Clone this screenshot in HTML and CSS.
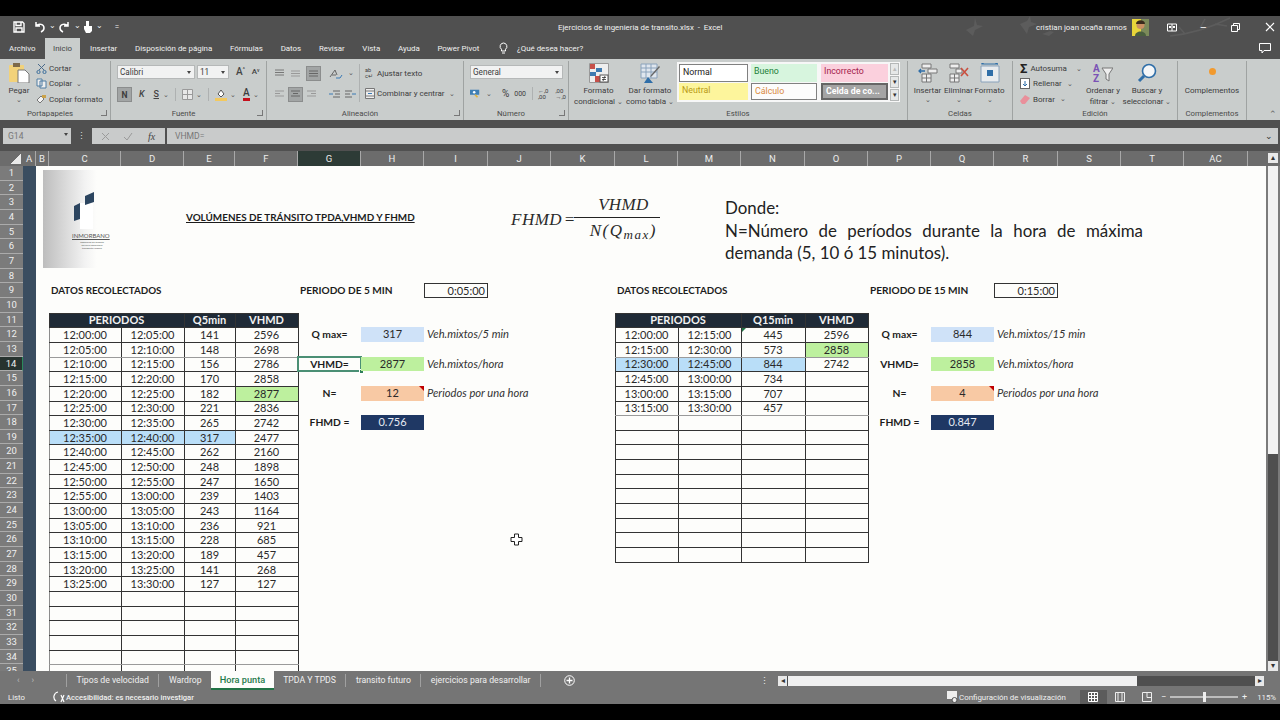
FILE: index.html
```html
<!DOCTYPE html>
<html lang="es">

<head>
    <meta charset="UTF-8">
    <title>Ejercicios de ingenieria de transito.xlsx - Excel</title>
    <link rel="stylesheet" href="styles.css">
</head>

<body>
    <div class="excel">

        <div class="titlebar">
            <div class="qat">
                <svg class="ico save" width="12" height="12" viewBox="0 0 12 12"><path d="M1 1h8.500L11 2.500V11H1z M3 1v3.500h5V1 M3 11V7h6v4" fill="none" stroke="#fff" stroke-width="1.400"/></svg>
                <svg class="ico" width="13" height="12" viewBox="0 0 13 12"><path d="M3 1v4h4 M3 5c3-3 8-2 8 2 0 2-1 3-3 4" fill="none" stroke="#fff" stroke-width="1.500"/></svg>
                <span class="caret">&#8964;</span>
                <svg class="ico" width="13" height="12" viewBox="0 0 13 12"><path d="M10 1v4H6 M10 5C7 2 2 3 2 7c0 2 1 3 3 4" fill="none" stroke="#fff" stroke-width="1.500"/></svg>
                <span class="caret">&#8964;</span>
                <svg class="ico" width="10" height="14" viewBox="0 0 10 14"><path d="M3 1h3v5h3v5l-2 2H3L1 9V6h2z" fill="#fff"/></svg>
                <span class="caret">&#8964;</span>
                <span class="caret small">=</span>
            </div>
            <div class="doc-title">Ejercicios de ingenieria de transito.xlsx &nbsp;-&nbsp; Excel</div>
            <svg class="leaves" width="300" height="22" viewBox="0 0 300 22"><path d="M6 14l8-4 1-8 2 7 6 1-8 4-2 6z M60 8l7-3 3-5 1 6 6 2-8 3-2 7z M82 18l8-3 4 1-5 4z" fill="#5c5c5c"/><path d="M210 20c20-2 40-8 60-18M240 12l5-9M255 8l12 2M225 18l-6-7" fill="none" stroke="#5c5c5c" stroke-width="1.500"/></svg>
            <div class="win">
                <span class="user">cristian joan ocaña ramos</span>
                <svg class="avatar" width="17" height="17" viewBox="0 0 17 17"><rect width="17" height="17" fill="#e8d53a"/><rect x="9" width="8" height="17" fill="#7c8a5a"/><circle cx="8.500" cy="6" r="4" fill="#c98f62"/><path d="M4 5c0-5 9-5 9 0z" fill="#3a2a1c"/><path d="M3 17c0-6 11-6 11 0z" fill="#4a5f3f"/></svg>
                <svg class="ico" width="10" height="9" viewBox="0 0 10 9"><path d="M.5 1h9v7h-9z M5 1v7" fill="none" stroke="#fff"/><path d="M2 3h2v2H2z M6 3h2v2H6z" fill="#fff"/></svg>
                <span class="win-btn">&#8211;</span>
                <svg class="ico" width="9" height="9" viewBox="0 0 9 9"><path d="M.5 2.500h6v6h-6z M2.500 2.500v-2h6v6h-2" fill="none" stroke="#fff"/></svg>
                <svg class="ico" width="10" height="10" viewBox="0 0 10 10"><path d="M1 1l8 8M9 1l-8 8" stroke="#fff" stroke-width="1.200"/></svg>
            </div>
        </div>

        <div class="tabs">
            <span class="tab">Archivo</span>
            <span class="tab current">Inicio</span>
            <span class="tab">Insertar</span>
            <span class="tab">Disposición de página</span>
            <span class="tab">Fórmulas</span>
            <span class="tab">Datos</span>
            <span class="tab">Revisar</span>
            <span class="tab">Vista</span>
            <span class="tab">Ayuda</span>
            <span class="tab">Power Pivot</span>
            <span class="tab tell">
                <svg width="9" height="13" viewBox="0 0 9 13"><path d="M4.500 1a3.500 3.500 0 0 0-2 6.300V9h4V7.300a3.500 3.500 0 0 0-2-6.300z M3 11h3" fill="none" stroke="#fff"/></svg>
                ¿Qué desea hacer?
            </span>
            <svg class="comment" width="12" height="11" viewBox="0 0 12 11"><path d="M.5.5h11v7H5L3 10V7.500H.5z" fill="none" stroke="#fff"/></svg>
        </div>

        <div class="ribbon">

            <div class="group g-clip">
                <div class="group-body">
                    <div class="big">
                        <svg width="22" height="20" viewBox="0 0 22 20"><rect x="1" y="2" width="15" height="17" rx="1" fill="#f2d27a"/><rect x="5" y="0" width="7" height="4" fill="#7d6a4a"/><path d="M10 7h7l4 4v9H10z" fill="#fff" stroke="#777"/></svg>
                        <span>Pegar</span>
                        <span class="chev">&#8964;</span>
                    </div>
                    <div class="stack">
                        <div class="line"><svg width="11" height="11" viewBox="0 0 11 11"><path d="M2 1l6 6M9 1L3 7" stroke="#4a6a8a" fill="none"/><circle cx="2.500" cy="9" r="1.600" fill="none" stroke="#3d6f9c"/><circle cx="8.500" cy="9" r="1.600" fill="none" stroke="#3d6f9c"/></svg>Cortar</div>
                        <div class="line"><svg width="11" height="11" viewBox="0 0 11 11"><path d="M1 1h5v7H1z M4 3h6v7H4z" fill="#eee" stroke="#4f7da3"/></svg>Copiar <span class="chev">&#8964;</span></div>
                        <div class="line"><svg width="11" height="11" viewBox="0 0 11 11"><path d="M1 6l4-4 3 3-4 4z" fill="#f3f3f3" stroke="#777"/><path d="M6 1h4v3H6z" fill="#caa24a"/></svg>Copiar formato</div>
                    </div>
                </div>
                <div class="group-name">Portapapeles<i class="launch"></i></div>
            </div>

            <div class="group g-font">
                <div class="group-body col">
                    <div class="tools">
                        <div class="combo font-name">Calibri<span class="arrow"></span></div>
                        <div class="combo font-size">11<span class="arrow"></span></div>
                        <span class="glyph big-a">A<sup>^</sup></span>
                        <span class="glyph small-a">A<sup>v</sup></span>
                    </div>
                    <div class="tools t2">
                        <span class="toggle on">N</span>
                        <span class="glyph it">K</span>
                        <span class="glyph un">S</span><span class="chev">&#8964;</span>
                        <i class="rule"></i>
                        <svg width="11" height="11" viewBox="0 0 11 11"><path d="M.5.5h10v10H.5z M.5 5.500h10 M5.500.5v10" fill="#e8e8e8" stroke="#9a9a9a"/></svg><span class="chev">&#8964;</span>
                        <i class="rule"></i>
                        <svg width="12" height="13" viewBox="0 0 12 13"><path d="M3 6l3-4 3 4-3 3z" fill="#fff" stroke="#555"/><rect y="10" width="12" height="3" fill="#f3c95e"/></svg><span class="chev">&#8964;</span>
                        <span class="font-color">A</span><span class="chev">&#8964;</span>
                    </div>
                </div>
                <div class="group-name">Fuente<i class="launch"></i></div>
            </div>

            <div class="group g-align">
                <div class="group-body">
                    <div class="col-tight">
                        <div class="tools">
                            <svg width="11" height="8" viewBox="0 0 11 8"><path d="M1 1h9M1 3.500h9M1 6h9" stroke="#777"/></svg>
                            <svg width="11" height="8" viewBox="0 0 11 8"><path d="M1 2h9M1 4.500h9M1 7h9" stroke="#999"/></svg>
                            <span class="toggle on"><svg width="11" height="8" viewBox="0 0 11 8"><path d="M1 2h9M1 4.500h9M1 7h9" stroke="#666"/></svg></span>
                            <svg class="orient" width="14" height="11" viewBox="0 0 14 11"><path d="M1 9l5-7 2 5M3 7h4" fill="none" stroke="#666"/><path d="M7 10h4l2-3" fill="none" stroke="#3a7ab5"/></svg><span class="chev">&#8964;</span>
                        </div>
                        <div class="tools t-align">
                            <svg width="11" height="8" viewBox="0 0 11 8"><path d="M1 1h9M1 3.500h5M1 6h9" stroke="#999"/></svg>
                            <span class="toggle on"><svg width="11" height="8" viewBox="0 0 11 8"><path d="M1 1h9M3 3.500h5M1 6h9" stroke="#666"/></svg></span>
                            <svg width="11" height="8" viewBox="0 0 11 8"><path d="M1 1h9M5 3.500h5M1 6h9" stroke="#999"/></svg>
                            <svg class="indent" width="11" height="8" viewBox="0 0 11 8"><path d="M4 1h7M6 4h5M4 7h7" stroke="#666"/><path d="M0 4h4" stroke="#3a7ab5"/></svg>
                            <svg width="11" height="8" viewBox="0 0 11 8"><path d="M0 1h7M0 4h5M0 7h7" stroke="#666"/><path d="M7 4h4" stroke="#3a7ab5"/></svg>
                        </div>
                    </div>
                    <div class="stack wrap-col">
                        <div class="line"><span class="ab-ico">ab<br>c&#8629;</span>Ajustar texto</div>
                        <div class="line"><svg width="10" height="11" viewBox="0 0 10 11"><path d="M.5.5h9v10h-9z M.5 3h9 M.5 8h9" fill="#eee" stroke="#777"/><path d="M3 5.500h4" stroke="#3a7ab5"/></svg>Combinar y centrar <span class="chev">&#8964;</span></div>
                    </div>
                </div>
                <div class="group-name">Alineación<i class="launch"></i></div>
            </div>

            <div class="group g-num">
                <div class="group-body col">
                    <div class="combo num-format">General<span class="arrow"></span></div>
                    <div class="tools t-num">
                        <svg width="13" height="11" viewBox="0 0 13 11"><rect y="1" width="11" height="6" fill="#3f7fb5"/><circle cx="5" cy="4" r="1.500" fill="#fff"/><path d="M6 7l3 3" stroke="#e0b23c" stroke-width="2"/></svg><span class="chev">&#8964;</span>
                        <span class="pct">%</span>
                        <span class="mil">000</span>
                        <i class="rule"></i>
                        <span class="dec">&#8592;,0<br>,00</span>
                        <span class="dec">,00<br>&#8594;,0</span>
                    </div>
                </div>
                <div class="group-name">Número<i class="launch"></i></div>
            </div>

            <div class="group g-styles">
                <div class="group-body">
                    <div class="big b-cf">
                        <svg width="20" height="20" viewBox="0 0 20 20"><path d="M.5.5h19v19H.5z" fill="#eee" stroke="#999"/><path d="M1 1h5v5H1z M6 13h5v6H6z" fill="#c6504a"/><path d="M7 5h6v4H7z M1 9h6v4H1z" fill="#3e7ab0"/><rect x="11" y="12" width="8" height="7" fill="#fff" stroke="#555"/><path d="M13 14.500h4M13 16.500h4M16 13l-2 5" stroke="#333" stroke-width=".8"/></svg>
                        <span>Formato<br>condicional <span class="chev">&#8964;</span></span>
                    </div>
                    <div class="big b-ft">
                        <svg width="21" height="20" viewBox="0 0 21 20"><path d="M1 1h16v14H1z M1 5h16M1 9h16M6 1v14M11 1v14" fill="#dfe6ee" stroke="#8aa2bb"/><path d="M20 4l-8 9-2 1 1-2 8-9z" fill="#666"/><path d="M4 20l4-6 5 6z" fill="#2f6ea8"/></svg>
                        <span>Dar formato<br>como tabla <span class="chev">&#8964;</span></span>
                    </div>
                    <div class="gallery">
                        <div class="style-grid">
                            <span class="st st-normal">Normal</span>
                            <span class="st st-good">Bueno</span>
                            <span class="st st-bad">Incorrecto</span>
                            <span class="st st-neutral">Neutral</span>
                            <span class="st st-calc">Cálculo</span>
                            <span class="st st-check">Celda de co...</span>
                        </div>
                        <div class="gallery-arrows">
                            <span class="ga off">&#9652;</span>
                            <span class="ga">&#9662;</span>
                            <span class="ga">&#9662;</span>
                        </div>
                    </div>
                </div>
                <div class="group-name">Estilos</div>
            </div>

            <div class="group g-cells">
                <div class="group-body">
                    <div class="big">
                        <svg width="20" height="20" viewBox="0 0 20 20"><path d="M4 1h9v4H4z M4 11h9v8H4z M4 15h9M8.500 11v8" fill="#eee" stroke="#777"/><path d="M10 6h9v4h-9z" fill="#eee" stroke="#777"/><path d="M1 8h6M3 6l-2 2 2 2" fill="none" stroke="#2f6ea8" stroke-width="1.300"/></svg>
                        <span>Insertar</span><span class="chev">&#8964;</span>
                    </div>
                    <div class="big">
                        <svg width="20" height="20" viewBox="0 0 20 20"><path d="M1 1h9v4H1z M1 11h9v8H1z M1 15h9M5.500 11v8" fill="#eee" stroke="#777"/><path d="M7 6h6v4H7z" fill="#eee" stroke="#777"/><path d="M12 5l7 8M19 5l-7 8" stroke="#c94f3f" stroke-width="1.600"/></svg>
                        <span>Eliminar</span><span class="chev">&#8964;</span>
                    </div>
                    <div class="big">
                        <svg width="20" height="20" viewBox="0 0 20 20"><path d="M1 3h18v16H1z" fill="#e8ebee" stroke="#8aa2bb"/><rect x="7" y="7" width="6" height="6" fill="#2f6ea8"/><path d="M2 1h16M1 1l3-1M18 1l-3-1" stroke="#2f6ea8"/></svg>
                        <span>Formato</span><span class="chev">&#8964;</span>
                    </div>
                </div>
                <div class="group-name">Celdas</div>
            </div>

            <div class="group g-edit">
                <div class="group-body">
                    <div class="stack">
                        <div class="line"><span class="sigma">&#931;</span>Autosuma <span class="chev wide-chev">&#8964;</span></div>
                        <div class="line"><svg width="10" height="11" viewBox="0 0 10 11"><rect x=".5" y=".5" width="9" height="10" fill="#fff" stroke="#666"/><path d="M5 3v5M3 6l2 2 2-2" fill="none" stroke="#2f6ea8"/></svg>Rellenar <span class="chev">&#8964;</span></div>
                        <div class="line"><svg width="10" height="9" viewBox="0 0 10 9"><path d="M0 6l5-6 5 3-5 6H2z" fill="#e9909b"/></svg>Borrar <span class="chev">&#8964;</span></div>
                    </div>
                    <div class="big b-sort">
                        <svg width="20" height="20" viewBox="0 0 20 20"><text x="0" y="9" font-family="Roboto" font-size="10" font-weight="700" fill="#7a52b5">A</text><text x="0" y="19" font-family="Roboto" font-size="10" font-weight="700" fill="#7a52b5">Z</text><path d="M9 5h11l-4 6v7l-3-2v-5z" fill="#eee" stroke="#777"/></svg>
                        <span>Ordenar y<br>filtrar <span class="chev">&#8964;</span></span>
                    </div>
                    <div class="big b-find">
                        <svg width="20" height="20" viewBox="0 0 20 20"><circle cx="12" cy="8" r="6.500" fill="#f4f6f8" stroke="#2f6ea8" stroke-width="1.600"/><path d="M7 13l-5 5" stroke="#2f6ea8" stroke-width="3"/></svg>
                        <span>Buscar y<br>seleccionar <span class="chev">&#8964;</span></span>
                    </div>
                </div>
                <div class="group-name">Edición</div>
            </div>

            <div class="group g-addin">
                <div class="group-body">
                    <div class="big">
                        <span class="dot"></span>
                        <span>Complementos</span>
                    </div>
                </div>
                <div class="group-name">Complementos</div>
            </div>

            <span class="collapse">&#8963;</span>
        </div>

        <div class="formula">
            <div class="name-box">G14<span class="arrow"></span></div>
            <span class="dots">&#8942;</span>
            <div class="fx-box">
                <svg width="9" height="9" viewBox="0 0 9 9"><path d="M1 1l7 7M8 1L1 8" stroke="#9a9a9a"/></svg>
                <svg width="10" height="9" viewBox="0 0 10 9"><path d="M1 5l3 3 5-7" fill="none" stroke="#9a9a9a"/></svg>
                <span class="fx">fx</span>
            </div>
            <div class="fx-input">VHMD=<span class="fx-caret">&#8964;</span></div>
        </div>

        <div class="col-heads">
            <div class="corner"><i></i></div>
            <div class="letters">
                <span>A</span><span>B</span><span>C</span><span>D</span><span>E</span><span>F</span>
                <span class="active">G</span><span>H</span><span>I</span><span>J</span><span>K</span>
                <span>L</span><span>M</span><span>N</span><span>O</span><span>P</span><span>Q</span>
                <span>R</span><span>S</span><span>T</span><span>AC</span>
            </div>
            <span class="sb-btn up">&#9652;</span>
        </div>

        <div class="work">
            <div class="row-heads">
                <span>1</span><span>2</span><span>3</span><span>4</span><span>5</span><span>6</span><span>7</span>
                <span>8</span><span>9</span><span>10</span><span>11</span><span>12</span><span>13</span>
                <span class="active">14</span><span>15</span><span>16</span><span>17</span><span>18</span>
                <span>19</span><span>20</span><span>21</span><span>22</span><span>23</span><span>24</span>
                <span>25</span><span>26</span><span>27</span><span>28</span><span>29</span><span>30</span>
                <span>31</span><span>32</span><span>33</span><span>34</span><span>35</span>
            </div>

            <div class="sheet">
                <div class="col-a"></div>

                <div class="logo">
                    <svg width="67" height="62" viewBox="0 0 67 62"><rect x="37" y="33" width="13" height="26" fill="#fff"/><path d="M31 36l6-3v16l-6 2z" fill="#2c4560"/><path d="M42 26l9-4v10l-9 3z" fill="#2c4560"/></svg>
                    <span class="logo-name">INMORBANO</span>
                    <span class="logo-sub">ingenieros de transito<br>servicio consultoria<br>transporte urbano</span>
                </div>

                <div class="sheet-title">VOLÚMENES DE TRÁNSITO TPDA,VHMD Y FHMD</div>

                <div class="equation">
                    <span>FHMD =</span>
                    <span class="frac">
                        <span class="num">VHMD</span>
                        <span class="den">N(Q<sub>max</sub>)</span>
                    </span>
                </div>

                <div class="note">
                    <p>Donde:</p>
                    <p>N=Número de períodos durante la hora de máxima demanda (5, 10 ó 15 minutos).</p>
                </div>

                <div class="cell bold heading col-c row-9">DATOS RECOLECTADOS</div>
                <div class="cell bold period col-g row-9">PERIODO DE 5 MIN</div>
                <div class="cell time-box col-i row-9">0:05:00</div>

                <div class="cell bold heading col-l row-9">DATOS RECOLECTADOS</div>
                <div class="cell bold period col-p row-9">PERIODO DE 15 MIN</div>
                <div class="cell time-box col-r row-9">0:15:00</div>

                <table class="data data-5">
                    <colgroup><col><col><col><col></colgroup>
                    <tr><th colspan="2">PERIODOS</th><th>Q5min</th><th>VHMD</th></tr>
                    <tr><td>12:00:00</td><td>12:05:00</td><td>141</td><td>2596</td></tr>
                    <tr class="soft"><td>12:05:00</td><td>12:10:00</td><td>148</td><td>2698</td></tr>
                    <tr><td>12:10:00</td><td>12:15:00</td><td>156</td><td>2786</td></tr>
                    <tr><td>12:15:00</td><td>12:20:00</td><td>170</td><td>2858</td></tr>
                    <tr><td>12:20:00</td><td>12:25:00</td><td>182</td><td class="max">2877</td></tr>
                    <tr><td>12:25:00</td><td>12:30:00</td><td>221</td><td>2836</td></tr>
                    <tr><td>12:30:00</td><td>12:35:00</td><td>265</td><td>2742</td></tr>
                    <tr class="peak"><td>12:35:00</td><td>12:40:00</td><td>317</td><td>2477</td></tr>
                    <tr><td>12:40:00</td><td>12:45:00</td><td>262</td><td>2160</td></tr>
                    <tr><td>12:45:00</td><td>12:50:00</td><td>248</td><td>1898</td></tr>
                    <tr><td>12:50:00</td><td>12:55:00</td><td>247</td><td>1650</td></tr>
                    <tr><td>12:55:00</td><td>13:00:00</td><td>239</td><td>1403</td></tr>
                    <tr><td>13:00:00</td><td>13:05:00</td><td>243</td><td>1164</td></tr>
                    <tr><td>13:05:00</td><td>13:10:00</td><td>236</td><td>921</td></tr>
                    <tr><td>13:10:00</td><td>13:15:00</td><td>228</td><td>685</td></tr>
                    <tr><td>13:15:00</td><td>13:20:00</td><td>189</td><td>457</td></tr>
                    <tr><td>13:20:00</td><td>13:25:00</td><td>141</td><td>268</td></tr>
                    <tr><td>13:25:00</td><td>13:30:00</td><td>127</td><td>127</td></tr>
                    <tr><td></td><td></td><td></td><td></td></tr>
                    <tr><td></td><td></td><td></td><td></td></tr>
                    <tr><td></td><td></td><td></td><td></td></tr>
                    <tr><td></td><td></td><td></td><td></td></tr>
                    <tr class="soft"><td></td><td></td><td></td><td></td></tr>
                    <tr><td></td><td></td><td></td><td></td></tr>
                </table>

                <div class="cell bold center col-g row-12">Q max=</div>
                <div class="cell center val-blue col-h row-12">317</div>
                <div class="cell unit col-i row-12">Veh.mixtos/5 min</div>
                <div class="cell bold center selected col-g row-14">VHMD=<i class="handle"></i></div>
                <div class="cell center val-green col-h row-14">2877</div>
                <div class="cell unit col-i row-14">Veh.mixtos/hora</div>
                <div class="cell bold center col-g row-16">N=</div>
                <div class="cell center val-orange col-h row-16">12<i class="flag"></i></div>
                <div class="cell unit col-i row-16">Periodos por una hora</div>
                <div class="cell bold center col-g row-18">FHMD =</div>
                <div class="cell center val-navy col-h row-18">0.756</div>

                <table class="data data-15">
                    <colgroup><col><col><col><col></colgroup>
                    <tr><th colspan="2">PERIODOS</th><th>Q15min</th><th>VHMD</th></tr>
                    <tr><td>12:00:00</td><td>12:15:00</td><td class="marked">445</td><td>2596</td></tr>
                    <tr class="soft"><td>12:15:00</td><td>12:30:00</td><td>573</td><td class="max">2858</td></tr>
                    <tr class="peak"><td>12:30:00</td><td>12:45:00</td><td>844</td><td>2742</td></tr>
                    <tr><td>12:45:00</td><td>13:00:00</td><td>734</td><td></td></tr>
                    <tr><td>13:00:00</td><td>13:15:00</td><td>707</td><td></td></tr>
                    <tr class="soft"><td>13:15:00</td><td>13:30:00</td><td>457</td><td></td></tr>
                    <tr><td></td><td></td><td></td><td></td></tr>
                    <tr><td></td><td></td><td></td><td></td></tr>
                    <tr><td></td><td></td><td></td><td></td></tr>
                    <tr><td></td><td></td><td></td><td></td></tr>
                    <tr><td></td><td></td><td></td><td></td></tr>
                    <tr><td></td><td></td><td></td><td></td></tr>
                    <tr><td></td><td></td><td></td><td></td></tr>
                    <tr><td></td><td></td><td></td><td></td></tr>
                    <tr><td></td><td></td><td></td><td></td></tr>
                    <tr><td></td><td></td><td></td><td></td></tr>
                </table>

                <div class="cell bold center col-p row-12">Q max=</div>
                <div class="cell center val-blue col-q row-12">844</div>
                <div class="cell unit col-r row-12">Veh.mixtos/15 min</div>
                <div class="cell bold center col-p row-14">VHMD=</div>
                <div class="cell center val-green col-q row-14">2858</div>
                <div class="cell unit col-r row-14">Veh.mixtos/hora</div>
                <div class="cell bold center col-p row-16">N=</div>
                <div class="cell center val-orange col-q row-16">4<i class="flag"></i></div>
                <div class="cell unit col-r row-16">Periodos por una hora</div>
                <div class="cell bold center col-p row-18">FHMD =</div>
                <div class="cell center val-navy col-q row-18">0.847</div>

                <svg class="cursor" width="13" height="13" viewBox="0 0 13 13"><path d="M4.500 1h4v3.500H12v4H8.500V12h-4V8.500H1v-4h3.500z" fill="#fff" stroke="#222"/></svg>
            </div>

            <div class="v-scroll">
                <div class="sb-track"><span class="sb-thumb"></span></div>
                <span class="sb-btn">&#9662;</span>
            </div>
        </div>

        <div class="sheet-tabs">
            <div class="tab-nav"><span>&#8249;</span><span>&#8250;</span></div>
            <span class="sheet-tab">Tipos de velocidad</span>
            <span class="sheet-tab plain">Wardrop</span>
            <span class="sheet-tab on">Hora punta</span>
            <span class="sheet-tab">TPDA Y TPDS</span>
            <span class="sheet-tab">transito futuro</span>
            <span class="sheet-tab">ejercicios para desarrollar</span>
            <svg class="add-sheet" width="11" height="11" viewBox="0 0 11 11"><circle cx="5.500" cy="5.500" r="4.800" fill="none" stroke="#fff"/><path d="M5.500 2.500v6M2.500 5.500h6" stroke="#fff" stroke-width="1.300"/></svg>
            <span class="tabs-dots">&#8942;</span>
            <div class="h-scroll">
                <span class="sb-btn">&#9666;</span>
                <span class="h-thumb"></span>
                <span class="sb-btn">&#9656;</span>
            </div>
        </div>

        <div class="status">
            <span class="ready">Listo</span>
            <svg width="12" height="12" viewBox="0 0 12 12"><path d="M5 1a5 5 0 0 0-2 9 M8 4l3 7M11 4l-3 7" fill="none" stroke="#fff" stroke-width="1.200"/></svg>
            <span class="a11y">Accesibilidad: es necesario investigar</span>
            <svg class="disp-ico" width="11" height="12" viewBox="0 0 11 12"><rect width="10" height="8" fill="#eee"/><circle cx="7.500" cy="9" r="2.500" fill="#eee" stroke="#555"/></svg>
            <span class="display">Configuración de visualización</span>
            <span class="view on"><svg width="10" height="10" viewBox="0 0 10 10"><path d="M.5.5h9v9h-9z M.5 3.500h9M.5 6.500h9M3.500.5v9M6.500.5v9" fill="none" stroke="#fff"/></svg></span>
            <span class="view"><svg width="10" height="10" viewBox="0 0 10 10"><path d="M.5.5h9v9h-9z M3 .5v9M7 .5v9" fill="none" stroke="#eee"/></svg></span>
            <span class="view"><svg width="10" height="10" viewBox="0 0 10 10"><path d="M.5.5h9v9h-9z M5 .5v5h4" fill="none" stroke="#eee"/></svg></span>
            <div class="zoom"><span>&#8722;</span><div class="slider"><i></i></div><span>+</span></div>
            <span class="pct-zoom">115%</span>
        </div>
    </div>
</body>

</html>
```

FILE: styles.css
```css
* {
    margin: 0;
    padding: 0;
    box-sizing: border-box;
}

:root {
    --row: 14.67px;
    --cols: [a] 13px [b] 13px [c] 72px [d] 63px [e] 51px [f] 63px [g] 63px [h] 63px [i] 64px [j] 63px [k] 64px [l] 63px [m] 63px [n] 64px [o] 63px [p] 63px [q] 63px [r] 64px [s] 63px [t] 63px [ac] 64px;
}

body {
    width: 1280px;
    height: 720px;
    overflow: hidden;
    background: #000;
    font-family: Roboto, "Noto Sans", sans-serif;
    padding-top: 16px;
}

.excel {
    height: 688px;
    display: flex;
    flex-direction: column;
    background: #505050;
}

/* title bar */

.titlebar {
    height: 22px;
    display: flex;
    align-items: center;
    color: #f2f2f2;
    font-size: 7.9px;
    position: relative;
}

.leaves {
    position: absolute;
    left: 960px;
    top: 0;
}

.qat {
    width: 460px;
    display: flex;
    align-items: center;
    gap: 3px;
    padding-left: 13px;
}

.qat .save {
    margin-right: 5px;
}

.caret {
    width: 6px;
    text-align: center;
    font-size: 8px;
    line-height: 6px;
    margin-top: -3px;
}

.caret.small {
    margin: 0 0 0 9px;
}

.doc-title {
    margin-left: 98px;
}

.win {
    margin-left: auto;
    display: flex;
    align-items: center;
    padding-right: 5px;
    position: relative;
}

.user {
    margin-right: 5px;
}

.avatar {
    margin-right: 18px;
}

.win-btn {
    margin: 0 24px 0 23px;
    font-size: 11px;
}

.win .ico:last-child {
    margin-left: 25px;
}

.tabs {
    height: 21px;
    display: flex;
    align-items: center;
    color: #f0f0f0;
    font-size: 7.9px;
    padding-left: 9px;
}

.tab {
    height: 21px;
    line-height: 21px;
    margin-right: 17.7px;
}

.tab.current {
    background: #c9cdcc;
    color: #444;
    padding: 0 8px;
    margin: 0 10px 0 -8px;
}

.tell {
    display: flex;
    align-items: center;
    gap: 9px;
    margin-left: 2px;
}

.comment {
    margin-left: auto;
    margin-right: 9px;
}

/* ribbon */

.ribbon {
    height: 61px;
    background: #c9cdcc;
    display: flex;
    color: #3c3c3c;
    font-size: 8px;
    position: relative;
}

.group {
    display: flex;
    flex-direction: column;
    border-right: 1px solid #9fa3a2;
    margin-top: 2px;
}

.group-body {
    flex: 1;
    display: flex;
    min-height: 0;
}

.group-body.col {
    flex-direction: column;
}

.group-name {
    height: 14px;
    text-align: center;
    font-size: 7.8px;
    line-height: 15px;
    color: #4a4a4a;
    position: relative;
}

.g-clip .group-name,
.g-font .group-name,
.g-align .group-name,
.g-num .group-name {
    padding-right: 10px;
}

.launch {
    position: absolute;
    right: 3px;
    top: 4px;
    width: 6px;
    height: 6px;
    border: 1px solid #777;
    border-width: 0 1px 1px 0;
}

.g-clip {
    width: 111px;
}

.g-font {
    width: 156px;
}

.g-align {
    width: 197px;
}

.g-num {
    width: 105px;
}

.g-styles {
    width: 339px;
}

.g-cells {
    width: 105px;
}

.g-edit {
    width: 165px;
}

.g-addin {
    width: 69px;
}

.big {
    display: flex;
    flex-direction: column;
    align-items: center;
    text-align: center;
    line-height: 10.5px;
    padding-top: 2px;
    white-space: nowrap;
}

.big svg {
    margin-bottom: 3px;
    flex: none;
}

.chev {
    font-size: 7px;
    line-height: 6px;
    color: #555;
}

.g-clip .big {
    width: 33px;
    padding-left: 5px;
}

.stack {
    display: flex;
    flex-direction: column;
    gap: 4.3px;
    padding-top: 2px;
}

.line {
    height: 11px;
    line-height: 11px;
    display: flex;
    align-items: center;
    gap: 2px;
    white-space: pre;
}

.g-clip .stack {
    margin-left: 3px;
}

.tools {
    display: flex;
    align-items: center;
    gap: 4px;
}

.combo {
    height: 14px;
    background: #f1f2f2;
    border: 1px solid #b5b8b8;
    line-height: 12px;
    padding-left: 2px;
    font-size: 8.2px;
    position: relative;
}

.arrow {
    position: absolute;
    right: 3px;
    top: 5px;
    border: 2.5px solid transparent;
    border-top: 3px solid #444;
    border-bottom: 0;
}

.g-font .group-body {
    padding: 4px 0 0 6px;
    gap: 8px;
}

.font-name {
    width: 78px;
}

.font-size {
    width: 32px;
    margin-left: -2px;
}

.glyph {
    font-size: 10px;
    font-weight: 500;
    color: #444;
    line-height: 1;
}

.glyph sup {
    font-size: 5px;
    vertical-align: top;
}

.big-a {
    margin-left: 3px;
}

.small-a {
    font-size: 8px;
    margin-left: 3px;
}

.toggle {
    width: 15px;
    height: 15px;
    background: #a2a5a5;
    border: 1px solid #8b8d8d;
    display: flex;
    align-items: center;
    justify-content: center;
    font-weight: 700;
    font-size: 8.5px;
}

.t2 {
    gap: 3px;
}

.it {
    font-style: italic;
    font-size: 9px;
    margin: 0 6px 0 4px;
}

.un {
    font-size: 9px;
    text-decoration: underline;
    margin-right: 1px;
}

.rule {
    width: 1px;
    height: 13px;
    background: #aeb1b1;
    margin: 0 3px;
}

.font-color {
    font-size: 10px;
    font-weight: 500;
    border-bottom: 3px solid #c5101c;
    line-height: 10px;
    margin-left: 4px;
}

.g-align .group-body {
    padding: 3px 0 0 7px;
    gap: 1px;
}

.col-tight {
    display: flex;
    flex-direction: column;
    gap: 3px;
    width: 84px;
}

.col-tight .tools {
    height: 18px;
    gap: 5px;
}

.col-tight .t-align {
    gap: 3px;
}

.orient {
    margin-left: 3px;
}

.indent {
    margin: 0 2px 0 9px;
}

.wrap-col {
    gap: 9px;
    padding: 4px 0 0 5px;
    border-left: 1px solid #aeb1b1;
    height: 38px;
}

.ab-ico {
    font-size: 5.5px;
    line-height: 5.5px;
    width: 10px;
    white-space: nowrap;
}

.g-num .group-body {
    padding: 4px 0 0 6px;
    gap: 8px;
}

.num-format {
    width: 93px;
}

.t-num {
    gap: 5px;
}

.pct {
    font-size: 10px;
    margin-left: 5px;
}

.mil {
    font-size: 7px;
}

.t-num .rule {
    margin: 0 0 0 1px;
}

.dec {
    font-size: 6px;
    line-height: 6px;
    width: 15px;
}

.b-cf {
    width: 59px;
}

.b-ft {
    width: 44px;
}

.gallery {
    display: flex;
    width: 223px;
    height: 40px;
    margin: 1px 0 0 5px;
    background: #f7f7f7;
    padding: 2px 2px;
    gap: 3px;
}

.style-grid {
    display: grid;
    grid-template-columns: 72px 70px 67px;
    grid-template-rows: 18px 17px;
    row-gap: 1px;
    flex: 1;
}

.st {
    font-size: 8.8px;
    line-height: 15px;
    padding-left: 3px;
    white-space: nowrap;
    overflow: hidden;
}

.st-normal {
    background: #fff;
    border: 1.5px solid #808080;
    color: #222;
    margin-right: 3px;
}

.st-good {
    background: #d7f5de;
    color: #22803a;
    margin-right: 4px;
}

.st-bad {
    background: #fbd0dd;
    color: #a3204a;
}

.st-neutral {
    background: #fdf59c;
    color: #b89a15;
    margin-right: 3px;
}

.st-calc {
    background: #fcfcfc;
    border: 1px solid #808080;
    color: #d98a3c;
    margin-right: 4px;
}

.st-check {
    background: #a4a4a4;
    border: 2px solid #666;
    color: #fff;
    font-weight: 700;
    line-height: 12px;
}

.gallery-arrows {
    width: 11px;
    display: flex;
    flex-direction: column;
    gap: 1px;
    margin: -1px -1px;
}

.ga {
    flex: 1;
    background: #e6e8e8;
    border: 1px solid #b5b8b8;
    font-size: 7px;
    line-height: 10px;
    text-align: center;
    color: #333;
}

.ga.off {
    color: #bbb;
}

.g-cells .group-body {
    padding-left: 4px;
}

.g-cells .big {
    width: 31px;
}

.g-edit .group-body {
    padding-left: 7px;
}

.g-edit .stack {
    width: 61px;
}

.sigma {
    font-size: 13px;
    font-weight: 700;
    color: #222;
    width: 11px;
    line-height: 11px;
}

.g-edit .line {
    gap: 3px;
}

.wide-chev {
    margin-left: 4px;
}

.b-sort {
    width: 44px;
}

.b-find {
    width: 44px;
}

.g-addin .group-body {
    justify-content: center;
}

.dot {
    width: 7px;
    height: 7px;
    border-radius: 50%;
    background: #f29a2e;
    margin: 5px 0 11px;
}

.collapse {
    position: absolute;
    right: 3px;
    bottom: 1px;
    font-size: 9px;
    line-height: 9px;
    color: #666;
}

/* formula bar */

.formula {
    height: 31px;
    padding: 8px 2px 7px 3px;
    display: flex;
    align-items: stretch;
    color: #777;
    font-size: 8.6px;
}

.name-box {
    width: 68px;
    background: #c9cbcb;
    padding-left: 5px;
    line-height: 16px;
    position: relative;
}

.dots {
    width: 21px;
    text-align: center;
    color: #ddd;
    line-height: 16px;
}

.fx-box {
    width: 73px;
    background: #c9cbcb;
    display: flex;
    align-items: center;
    gap: 13px;
    padding-left: 9px;
    margin-right: 2px;
}

.fx {
    font-family: "Liberation Serif", serif;
    font-style: italic;
    font-size: 10px;
    color: #444;
    margin-left: 2px;
}

.fx-input {
    flex: 1;
    background: #c9cbcb;
    padding-left: 8px;
    line-height: 16px;
    display: flex;
    justify-content: space-between;
}

.fx-caret {
    color: #333;
    padding-right: 5px;
}

/* sheet headers */

.col-heads {
    height: 15px;
    display: flex;
    align-items: stretch;
    background: #6c6c6c;
    color: #ececec;
    font-size: 9.5px;
}

.corner {
    width: 23px;
    padding: 3px 0 0 10px;
}

.corner i {
    display: block;
    width: 11px;
    height: 10px;
    background: linear-gradient(138deg, transparent 50%, #eaeaea 50%);
}

.letters {
    display: grid;
    grid-template-columns: var(--cols);
}

.letters span {
    text-align: center;
    line-height: 15px;
    border-right: 1px solid #a8a8a8;
}

.col-heads .active {
    background: #2d3b36;
    border-bottom: 1px solid #2c8a5c;
}

.col-heads .up {
    margin: 2px 2px 3px auto;
    width: 10px;
}

.work {
    height: 505px;
    display: flex;
    overflow: hidden;
}

.row-heads {
    width: 23px;
    flex: none;
    display: grid;
    grid-auto-rows: var(--row);
    background: #7b7b7b;
    color: #efefef;
    font-size: 9.5px;
    text-align: center;
}

.row-heads span {
    line-height: 14px;
    border-bottom: 1px solid #ababab;
}

.row-heads .active {
    background: #27332f;
    border-right: 1px solid #2c8a5c;
}

.sheet {
    width: 1243px;
    flex: none;
    background: #fdfdfb;
    position: relative;
    display: grid;
    grid-template-columns: var(--cols);
    grid-template-rows: repeat(35, var(--row));
    font-family: Lato, "Liberation Sans", sans-serif;
    font-size: 11px;
    color: #2a2a2a;
}

.col-a {
    grid-column: a;
    grid-row: 1 / -1;
    background: #3a4d60;
}

.cell {
    line-height: var(--row);
    white-space: nowrap;
    position: relative;
}

.bold {
    font-weight: 700;
    font-size: 10.3px;
    color: #1c1c1c;
}

.heading {
    font-size: 9.8px;
    padding-left: 2px;
}

.period {
    font-size: 10.1px;
    padding-left: 2px;
}

.center {
    text-align: center;
}

.col-c {
    grid-column: c;
}

.col-g {
    grid-column: g;
}

.col-h {
    grid-column: h;
}

.col-i {
    grid-column: i;
}

.col-l {
    grid-column: l;
}

.col-p {
    grid-column: p;
}

.col-q {
    grid-column: q;
}

.col-r {
    grid-column: r;
}

.row-9 {
    grid-row: 9;
}

.row-12 {
    grid-row: 12;
}

.row-14 {
    grid-row: 14;
}

.row-16 {
    grid-row: 16;
}

.row-18 {
    grid-row: 18;
}

.time-box {
    border: 1px solid #333;
    text-align: right;
    padding-right: 2px;
    line-height: 13px;
}

.unit {
    font-style: italic;
    padding-left: 3px;
    color: #333;
    font-size: 11.2px;
}

.val-blue {
    background: #cfe2f8;
}

.val-green {
    background: #bdf09e;
}

.val-orange {
    background: #f8c9a4;
}

.val-navy {
    background: #1f3864;
    color: #e6eaf2;
}

.flag {
    position: absolute;
    top: 0;
    right: 0;
    border-top: 5px solid #c00000;
    border-left: 5px solid transparent;
}

.selected {
    outline: 2px solid #4a8f74;
    outline-offset: -1px;
}

.handle {
    position: absolute;
    right: -3px;
    bottom: -3px;
    width: 5px;
    height: 5px;
    background: #2f7d5a;
    border: 1px solid #fff;
}

.data {
    border-collapse: collapse;
    table-layout: fixed;
    align-self: start;
    width: 100%;
    margin-left: -.5px;
    text-align: center;
}

.data-5 {
    grid-column: c / span 4;
    grid-row: 11 / span 24;
}

.data-15 {
    grid-column: l / span 4;
    grid-row: 11 / span 17;
}

.data-5 col:nth-child(1) {
    width: 72px;
}

.data-5 col:nth-child(2) {
    width: 63px;
}

.data-5 col:nth-child(3) {
    width: 51px;
}

.data-5 col:nth-child(4) {
    width: 63px;
}

.data-15 col:nth-child(1),
.data-15 col:nth-child(2),
.data-15 col:nth-child(4) {
    width: 63px;
}

.data-15 col:nth-child(3) {
    width: 64px;
}

.data tr {
    height: var(--row);
}

.data th,
.data td {
    border: 1px solid #333;
    padding: 0;
    height: var(--row);
    line-height: 12px;
}

.data th {
    background: #1f2a36;
    color: #f2f2f2;
    font-weight: 700;
}

.soft td {
    border-bottom-color: #9a9a9a;
}

.data-5 td:first-child {
    border-left-color: #8c8c8c;
}

.data-15 td:nth-child(3) {
    border-left-color: #9a9a9a;
}

.data .max {
    background: #bdf09e;
}

.peak td:nth-child(-n+3) {
    background: #b9def8;
}

.marked {
    position: relative;
}

.marked::before {
    content: "";
    position: absolute;
    top: 0;
    left: 0;
    border-top: 4px solid #217346;
    border-right: 4px solid transparent;
}

.logo {
    grid-column: b / span 3;
    grid-row: 1 / span 8;
    margin: 4px 0 0 7px;
    width: 67px;
    height: 98px;
    background: linear-gradient(90deg, #bdbdbd, #f2f2f2 62%, #fdfdfb 80%);
    display: flex;
    flex-direction: column;
    align-items: flex-end;
    color: #555;
}

.logo svg {
    flex: none;
}

.logo-name {
    font-size: 6px;
    line-height: 7px;
    text-decoration: underline;
    width: 38px;
}

.logo-sub {
    font-size: 2.5px;
    line-height: 3px;
    width: 36px;
    text-align: center;
    margin-top: 2px;
}

.sheet-title {
    grid-column: e / span 4;
    grid-row: 4;
    font-weight: 700;
    font-size: 9.9px;
    line-height: var(--row);
    text-decoration: underline;
    white-space: nowrap;
    padding-left: 2px;
    color: #1c1c1c;
}

.equation {
    grid-column: j / span 3;
    grid-row: 1 / span 8;
    display: flex;
    align-items: center;
    padding: 0 0 10px 23px;
    font-family: "Liberation Serif", serif;
    font-style: italic;
    font-size: 17px;
    letter-spacing: .5px;
    word-spacing: -3px;
    white-space: nowrap;
}

.frac {
    display: flex;
    flex-direction: column;
    align-items: center;
    width: 86px;
    margin-left: -2px;
    letter-spacing: .3px;
}

.num {
    border-bottom: 1px solid #222;
    width: 100%;
    text-align: center;
    line-height: 25px;
    padding-left: 13px;
}

.den {
    line-height: 25px;
    letter-spacing: 1.5px;
    padding-left: 13px;
}

.den sub {
    font-size: 13px;
    vertical-align: -3px;
}

.note {
    grid-column: n / span 6;
    grid-row: 3 / span 6;
    margin: 2px 0 0 -16px;
    width: 418px;
    font-size: 16.9px;
    line-height: 22.5px;
    text-align: justify;
    color: #222;
}

.cursor {
    position: absolute;
    left: 487px;
    top: 367px;
}

.v-scroll {
    width: 14px;
    flex: none;
    display: flex;
    flex-direction: column;
    padding: 0 2px;
    background: #7b7b7b;
}

.sb-track {
    flex: 1;
    background: #4f4f4f;
}

.sb-thumb {
    display: block;
    height: 288px;
    background: #f2f2f2;
}

.sb-btn {
    flex: none;
    background: #e8e8e8;
    color: #333;
    font-size: 8px;
    line-height: 10px;
    height: 10px;
    text-align: center;
}

/* sheet tabs and status */

.sheet-tabs {
    height: 19px;
    display: flex;
    align-items: center;
    background: #757575;
    color: #f0f0f0;
    font-size: 8.7px;
}

.tab-nav {
    width: 67px;
    display: flex;
    gap: 12px;
    padding-left: 17px;
    color: #bbb;
    height: 13px;
    line-height: 12px;
    border-right: 1px solid #a0a0a0;
}

.sheet-tab {
    padding: 0 9.5px;
    height: 13px;
    line-height: 13px;
    border-right: 1px solid #a0a0a0;
    white-space: nowrap;
}

.sheet-tab.plain {
    border: 0;
}

.sheet-tab.on {
    height: 19px;
    padding: 0 8.5px;
    line-height: 18px;
    background: #fdfdfb;
    color: #1e7a4a;
    font-size: 9.2px;
    font-weight: 500;
    border: 0;
    border-bottom: 2px solid #217346;
}

.add-sheet {
    margin-left: 23px;
}

.tabs-dots {
    margin-left: 185px;
    color: #eee;
}

.h-scroll {
    width: 486px;
    margin-left: 9px;
    display: flex;
    height: 10px;
    background: #4f4f4f;
    gap: 1px;
    align-items: stretch;
}

.h-scroll .sb-btn {
    width: 9px;
    height: auto;
    line-height: 10px;
}

.h-thumb {
    width: 349px;
    background: #f0f0f0;
    margin-right: auto;
}

.status {
    height: 14px;
    display: flex;
    align-items: center;
    background: #757575;
    color: #f0f0f0;
    font-size: 7.8px;
    padding-left: 8px;
}

.ready {
    width: 45px;
}

.a11y {
    margin-left: 1px;
    font-weight: 500;
    font-size: 7.6px;
}

.disp-ico {
    margin-left: auto;
}

.display {
    margin: 0 14px 0 1px;
    font-size: 7.9px;
}

.view {
    width: 27px;
    height: 14px;
    display: flex;
    align-items: center;
    justify-content: center;
}

.view.on {
    background: #5c5c5c;
}

.zoom {
    display: flex;
    align-items: center;
    gap: 4px;
    font-size: 9px;
}

.slider {
    width: 68px;
    height: 2px;
    background: #bdbdbd;
    position: relative;
}

.slider i {
    position: absolute;
    left: 33px;
    top: -4px;
    width: 3px;
    height: 10px;
    background: #eee;
}

.pct-zoom {
    margin: 0 4px 0 10px;
}
```
